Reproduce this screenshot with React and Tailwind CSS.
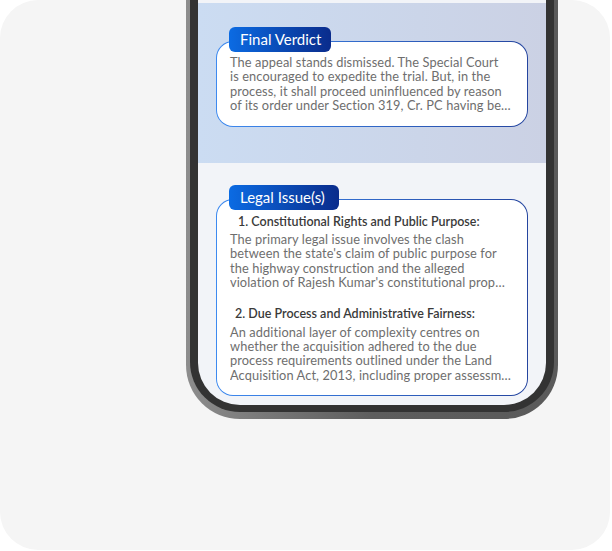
import React from "react";

// lines as they wrap in the design; the last line of each block is clipped with an ellipsis
const verdict = [
  "The appeal stands dismissed. The Special Court",
  "is encouraged to expedite the trial. But, in the",
  "process, it shall proceed uninfluenced by reason",
  "of its order under Section 319, Cr. PC having been passed and shall decide the case on its own merits.",
];

const issues = [
  {
    title: "1. Constitutional Rights and Public Purpose:",
    indent: "pl-2",
    gap: "mt-[3px]",
    body: [
      "The primary legal issue involves the clash",
      "between the state's claim of public purpose for",
      "the highway construction and the alleged",
      "violation of Rajesh Kumar's constitutional property rights under Article 300A.",
    ],
  },
  {
    title: "2. Due Process and Administrative Fairness:",
    indent: "pl-[5px]",
    gap: "mt-[4px]",
    body: [
      "An additional layer of complexity centres on",
      "whether the acquisition adhered to the due",
      "process requirements outlined under the Land",
      "Acquisition Act, 2013, including proper assessment of compensation.",
    ],
  },
];

function Lines({ lines, className = "" }) {
  return (
    <div className={`text-[12.8px] leading-[14.4px] tracking-[0.1px] text-[#6e6e6e] ${className}`}>
      {lines.map((l, i) => (
        <div key={i} className={i === lines.length - 1 ? "truncate" : "whitespace-nowrap"}>
          {l}
        </div>
      ))}
    </div>
  );
}

function Tab({ label, width }) {
  return (
    <div
      className={`absolute left-[13px] top-[-14px] h-[25px] ${width} rounded-[6px] bg-gradient-to-r from-[#0b6be3] to-[#0a2c8c] flex items-center pl-[11px] text-white text-[15px] leading-none`}
    >
      {label}
    </div>
  );
}

function Box({ label, tabWidth, children }) {
  return (
    <div className="relative rounded-[17px] bg-gradient-to-r from-[#3d8af0] to-[#25459f] p-px">
      <Tab label={label} width={tabWidth} />
      <div className="rounded-[16px] bg-white pl-[13px] pr-[16px]">{children}</div>
    </div>
  );
}

export default function App() {
  return (
    <div className="w-[612px] h-[551px] bg-white" style={{ fontFamily: "Lato, 'Noto Sans', sans-serif" }}>
      <div className="w-[610px] h-[550px] rounded-[38px] bg-[#f5f5f5] overflow-hidden">
        <div className="ml-[186px] w-[372px] h-[419px] rounded-b-[54px] bg-gradient-to-r from-[#8d8d8d] via-[#5d5d5d] to-[#5a5a5a] px-[4px] pb-[7px]">
          <div className="h-full rounded-b-[50px] bg-[#333333] px-[8px] pb-[7px]">
            <div className="h-full rounded-b-[42px] bg-[#f2f4f8] overflow-hidden pt-[3px]">
              <div className="h-[160px] bg-gradient-to-r from-[#cbdcf2] to-[#cbd1e4] px-[18px] pt-[38px]">
                <Box label="Final Verdict" tabWidth="w-[102px]">
                  <Lines lines={verdict} className="pt-[13px] pb-[13px]" />
                </Box>
              </div>
              <div className="px-[18px] pt-[36px]">
                <Box label="Legal Issue(s)" tabWidth="w-[110px]">
                  <div className="pt-[14px] pb-[13px] flex flex-col gap-[16px]">
                    {issues.map((it) => (
                      <div key={it.title}>
                        <div className={`${it.indent} text-[12.5px] leading-[15px] font-semibold text-[#3a3a3a] whitespace-nowrap`}>
                          {it.title}
                        </div>
                        <Lines lines={it.body} className={it.gap} />
                      </div>
                    ))}
                  </div>
                </Box>
              </div>
            </div>
          </div>
        </div>
      </div>
    </div>
  );
}
